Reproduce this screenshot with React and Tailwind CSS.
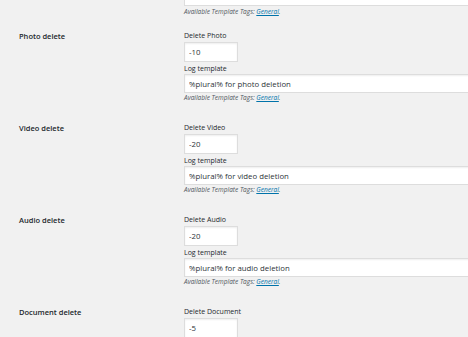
const sections = [
  { title: "Photo delete", label: "Delete Photo", value: "-10", log: "%plural% for photo deletion" },
  { title: "Video delete", label: "Delete Video", value: "-20", log: "%plural% for video deletion" },
  { title: "Audio delete", label: "Delete Audio", value: "-20", log: "%plural% for audio deletion" },
  { title: "Document delete", label: "Delete Document", value: "-5", log: null },
];

function TagsHint() {
  return (
    <p className="h-[10px] text-[6.5px] leading-[10px] italic text-[#50575e]">
      Available Template Tags:{" "}
      <a href="#" className="text-[#0073aa] underline">
        General
      </a>
      .
    </p>
  );
}

function Section({ title, label, value, log }) {
  return (
    <div className="flex h-[92px] pt-[14px]">
      <div className="w-[184px] shrink-0 pl-[19px] text-[7.5px] font-semibold leading-[10px] text-[#23282d]">
        {title}
      </div>
      <div className="flex min-w-0 flex-1 flex-col">
        <label className="h-[10px] text-[7px] leading-[10px] text-[#23282d]">{label}</label>
        <input
          readOnly
          value={value}
          className="mt-[1px] h-[20px] w-[54px] border border-[#ddd] bg-white px-[4px] text-[7.8px] text-[#2c3338] shadow-[inset_0_1px_2px_rgba(0,0,0,0.07)] outline-none"
        />
        {log && (
          <>
            <label className="mt-[2px] h-[10px] text-[7px] leading-[10px] text-[#23282d]">
              Log template
            </label>
            <input
              readOnly
              value={log}
              className="h-[19px] w-[300px] border border-[#ddd] bg-white px-[4px] text-[7.8px] text-[#2c3338] shadow-[inset_0_1px_2px_rgba(0,0,0,0.07)] outline-none"
            />
            <TagsHint />
          </>
        )}
      </div>
    </div>
  );
}

export default function App() {
  return (
    <div
      className="h-[337px] w-[468px] overflow-hidden bg-[#f1f1f1]"
      style={{ fontFamily: '"Open Sans", "Noto Sans", sans-serif' }}
    >
      <div className="flex">
        <div className="w-[184px] shrink-0" />
        <div className="flex min-w-0 flex-1 flex-col">
          <div className="h-[6px] w-[300px] border-x border-b border-[#ddd] bg-white" />
          <div className="mt-[1px]">
            <TagsHint />
          </div>
        </div>
      </div>
      {sections.map((s) => (
        <Section key={s.title} {...s} />
      ))}
    </div>
  );
}
